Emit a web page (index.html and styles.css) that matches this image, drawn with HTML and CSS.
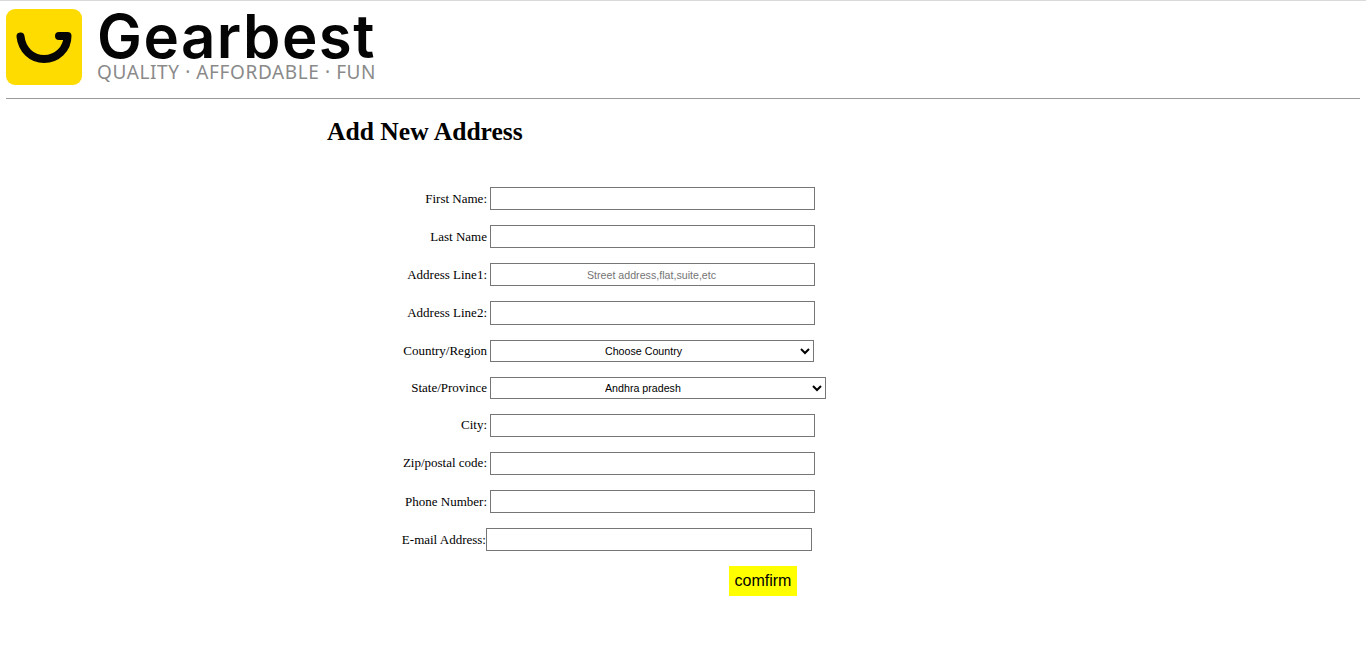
FILE: index.html
```html
<!DOCTYPE html>
<html lang="en">
<head>
<meta charset="utf-8">
<title>Add New Address</title>
<link rel="stylesheet" href="styles.css">
</head>
<body>
<header class="brand">
  <svg class="mark" width="76" height="76" viewBox="0 0 76 76" aria-hidden="true">
    <rect width="76" height="76" rx="9" fill="#ffdc00"/>
    <path d="M14.5 27.5C16 41 26 50 38 50C51 50 61.5 40 61.5 27L53 27" fill="none" stroke="#050505" stroke-width="8" stroke-linecap="round" stroke-linejoin="round"/>
  </svg>
  <div class="wordmark">
    <div class="name">Gearbest</div>
    <div class="tagline">QUALITY · AFFORDABLE · FUN</div>
  </div>
</header>
<hr class="rule">
<main class="page">
  <h1 class="title">Add New Address</h1>
  <form class="form">
    <div class="row"><label class="label">First Name:</label><input class="field" type="text"></div>
    <div class="row"><label class="label">Last Name</label><input class="field" type="text"></div>
    <div class="row"><label class="label">Address Line1:</label><input class="field" type="text" placeholder="Street address,flat,suite,etc"></div>
    <div class="row"><label class="label">Address Line2:</label><input class="field tall" type="text"></div>
    <div class="row"><label class="label">Country/Region</label><select class="choice"><option>Choose Country</option></select></div>
    <div class="row"><label class="label">State/Province</label><select class="choice wide"><option>Andhra pradesh</option></select></div>
    <div class="row"><label class="label raised">City:</label><input class="field" type="text"></div>
    <div class="row"><label class="label raised">Zip/postal code:</label><input class="field" type="text"></div>
    <div class="row"><label class="label">Phone Number:</label><input class="field" type="text"></div>
    <div class="row"><label class="label tight">E-mail Address:</label><input class="field flush" type="text"></div>
    <div class="actions"><button class="confirm" type="button">comfirm</button></div>
  </form>
</main>
</body>
</html>
```
FILE: styles.css
```css
html, body {
  margin: 0;
  padding: 0;
  background: #fff;
}
body {
  border-top: 1px solid #d9d9d9;
  padding: 0 6px;
  font-family: "Liberation Serif", serif;
  color: #000;
  height: 646px;
  overflow: hidden;
}
.brand {
  display: flex;
  align-items: flex-start;
  gap: 15px;
  padding-top: 8px;
  height: 88px;
  box-sizing: border-box;
}
.mark { display: block; flex: none; }
.wordmark {
  display: flex;
  flex-direction: column;
  width: 280px;
}
.name {
  font-family: "Inter", sans-serif;
  font-weight: 600;
  font-size: 60px;
  line-height: 54px;
  letter-spacing: 1.45px;
  color: #050505;
  white-space: nowrap;
}
.tagline {
  margin-top: -1px;
  font-family: "Noto Sans", sans-serif;
  font-size: 19px;
  line-height: 20px;
  letter-spacing: 0.6px;
  color: #8a8a8a;
  white-space: nowrap;
}
.rule {
  margin: 9px 0 0;
  border: 0;
  border-top: 1px solid #9a9a9a;
}
.page { padding-left: 321px; }
.title {
  margin: 19px 0 0;
  font-size: 25.6px;
  line-height: 28px;
  font-weight: bold;
}
.form {
  display: flex;
  flex-direction: column;
  gap: 15px;
  margin-top: 41px;
}
.row {
  display: flex;
  align-items: center;
}
.label {
  width: 160px;
  flex: none;
  text-align: right;
  font-size: 13px;
  white-space: nowrap;
}
.label.tight { width: 159px; }
.label.raised { margin-bottom: 2px; }
.field {
  box-sizing: border-box;
  width: 325px;
  height: 23px;
  margin: 0 0 0 3px;
  padding: 1px 4px 1px 2px;
  border: 1px solid #767676;
  border-radius: 0;
  background: #fff;
  font-family: "Liberation Sans", sans-serif;
  font-size: 10.67px;
  text-align: center;
}
.field.tall { height: 24px; }
.field.flush { width: 326px; margin-left: 0; }
.field::placeholder { color: #757575; opacity: 1; }
.choice {
  box-sizing: border-box;
  width: 324px;
  height: 22px;
  margin: 0 0 0 3px;
  padding: 0 0 0 110px;
  border: 1px solid #767676;
  border-radius: 0;
  background: #fff;
  color: #000;
  font-family: "Liberation Sans", sans-serif;
  font-size: 10.67px;
}
.choice.wide { width: 336px; }
.actions {
  display: flex;
  padding-left: 402px;
}
.confirm {
  width: 68px;
  height: 30px;
  padding: 0;
  border: 0;
  background: #ffff00;
  color: #000;
  font-family: "Liberation Sans", sans-serif;
  font-size: 16px;
}
```
